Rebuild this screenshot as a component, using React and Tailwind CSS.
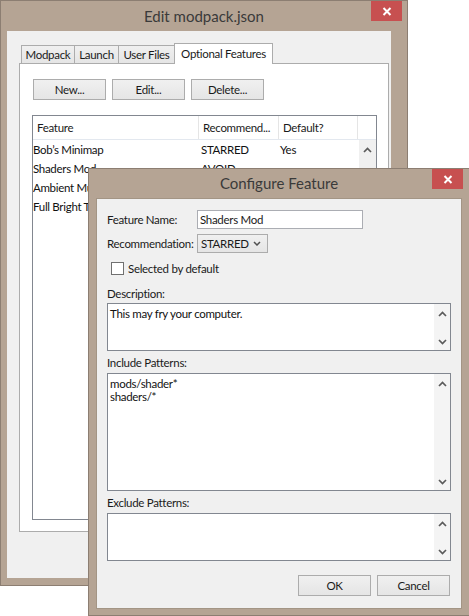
import React from 'react';

function Chevron({ up }) {
  return (
    <svg width="9" height="6" viewBox="0 0 9 6">
      <polyline
        points={up ? '1,5 4.5,1.5 8,5' : '1,1 4.5,4.5 8,1'}
        fill="none"
        stroke="#5a5a5a"
        strokeWidth="1.7"
      />
    </svg>
  );
}

function CloseButton({ className }) {
  return (
    <div className={`absolute top-0 w-[31px] h-[20px] bg-[#c75050] flex items-center justify-center ${className}`}>
      <svg width="10" height="9" viewBox="0 0 10 9">
        <path d="M1.5 1 L8.5 8 M8.5 1 L1.5 8" stroke="#ffffff" strokeWidth="2" />
      </svg>
    </div>
  );
}

function Btn({ children, className }) {
  return (
    <div className={`flex items-center justify-center h-[21px] w-[73px] border border-[#acacac] bg-linear-to-b from-[#f0f0f0] to-[#e5e5e5] text-[#1a1a1a] ${className || ''}`}>
      {children}
    </div>
  );
}

function TextBox({ h, lines }) {
  return (
    <div className={`flex w-[344px] border border-[#828790] bg-white ${h}`}>
      <div className="flex-1 pl-[2px] pt-[3px] leading-[13px] text-[#111]">
        {lines.map((l) => (
          <div key={l} className="h-[13px]">{l}</div>
        ))}
      </div>
      <div className="w-[16px] bg-[#f4f4f4] flex flex-col items-center justify-between pt-[7px] pb-[5px]">
        <Chevron up />
        <Chevron />
      </div>
    </div>
  );
}

const rows = [
  ['Bob\u2019s Minimap', 'STARRED', 'Yes'],
  ['Shaders Mod', 'AVOID', ''],
  ['Ambient Music', '', ''],
  ['Full Bright Textures', '', ''],
];

export default function App() {
  return (
    <div className="relative w-[469px] h-[616px] bg-white overflow-hidden font-['Lato',sans-serif] text-[11.5px] tracking-[-0.3px]">
      {/* Edit modpack.json window */}
      <div className="absolute left-0 top-0 w-[408px] h-[586px] bg-[#b5a494] border border-[#8c7e72] flex flex-col">
        <div className="relative h-[30px] flex items-center justify-center text-[15px] tracking-normal text-[#3a3a3a]">
          Edit modpack.json
          <CloseButton className="right-[5px]" />
        </div>
        <div className="ml-[6px] w-[384px] flex-1 mb-[7px] bg-[#f0f0f0] flex flex-col pl-[12px] pr-[2px] pt-[11px] pb-[46px]">
          <div className="flex items-end ml-[2px] h-[21px]">
            <div className="w-[53px] h-[18px] border-l border-t border-[#acacac] bg-linear-to-b from-[#f0f0f0] to-[#e5e5e5] flex items-center justify-center text-[#1a1a1a]">Modpack</div>
            <div className="w-[44px] h-[18px] border-l border-t border-[#acacac] bg-linear-to-b from-[#f0f0f0] to-[#e5e5e5] flex items-center justify-center text-[#1a1a1a]">Launch</div>
            <div className="w-[56px] h-[18px] border-l border-t border-[#acacac] bg-linear-to-b from-[#f0f0f0] to-[#e5e5e5] flex items-center justify-center text-[#1a1a1a]">User Files</div>
            <div className="relative z-10 w-[99px] h-[21px] -mb-px border-l border-t border-r border-[#acacac] bg-white flex items-center justify-center text-[#1a1a1a]">Optional Features</div>
          </div>
          <div className="flex-1 bg-white border border-[#acacac] pl-[12px] pt-[15px]">
            <div className="flex gap-[6px] ml-px">
              <Btn>New...</Btn>
              <Btn>Edit...</Btn>
              <Btn>Delete...</Btn>
            </div>
            <div className="mt-[15px] w-[345px] h-[405px] border border-[#828790] bg-white flex flex-col">
              <div className="flex h-[24px] border-b border-[#e3e8ef] text-[#1a1a1a]">
                <div className="w-[166px] border-r border-[#e5e5e5] pl-[4px] flex items-center">Feature</div>
                <div className="w-[80px] border-r border-[#e5e5e5] pl-[4px] flex items-center">Recommend...</div>
                <div className="w-[79px] border-r border-[#e5e5e5] pl-[4px] flex items-center">Default?</div>
              </div>
              <div className="flex flex-1">
                <div className="flex-1">
                  {rows.map((r) => (
                    <div key={r[0]} className="flex h-[19px] items-center text-[#111]">
                      <div className="w-[166px] whitespace-nowrap overflow-hidden">{r[0]}</div>
                      <div className="w-[80px] pl-[2px]">{r[1]}</div>
                      <div className="pl-px">{r[2]}</div>
                    </div>
                  ))}
                </div>
                <div className="w-[17px] bg-[#f0f0f0] flex flex-col items-center pt-[7px]">
                  <Chevron up />
                </div>
              </div>
            </div>
          </div>
        </div>
      </div>

      {/* Configure Feature dialog */}
      <div className="absolute left-[88px] top-[168px] w-[382px] h-[448px] bg-[#b5a494] border border-[#8c7e72] flex flex-col">
        <div className="relative h-[29px] flex items-center justify-center text-[15px] tracking-normal text-[#3a3a3a]">
          Configure Feature
          <CloseButton className="right-[6px]" />
        </div>
        <div className="ml-[7px] w-[366px] flex-1 mb-[6px] bg-[#f0f0f0] border border-[#a39585] pl-[10px] pt-[11px] text-[#1a1a1a]">
          <div className="flex items-center h-[19px]">
            <div className="w-[90px] whitespace-nowrap">Feature Name:</div>
            <div className="w-[166px] h-[19px] border border-[#abadb3] bg-white pl-[2px] flex items-center">Shaders Mod</div>
          </div>
          <div className="flex items-center h-[19px] mt-[5px]">
            <div className="w-[90px] whitespace-nowrap">Recommendation:</div>
            <div className="w-[71px] h-[19px] border border-[#acacac] bg-linear-to-b from-[#f0f0f0] to-[#e5e5e5] pl-[3px] pr-[6px] flex items-center justify-between">
              <span>STARRED</span>
              <svg width="8" height="5" viewBox="0 0 8 5">
                <polyline points="1,1 4,4 7,1" fill="none" stroke="#505050" strokeWidth="1.5" />
              </svg>
            </div>
          </div>
          <div className="flex items-center mt-[9px] ml-[4px] h-[13px]">
            <div className="w-[13px] h-[13px] border border-[#707070] bg-white" />
            <span className="ml-[4px]">Selected by default</span>
          </div>
          <div className="mt-[11px] h-[15px] leading-[15px]">Description:</div>
          <div className="mt-[2px]">
            <TextBox h="h-[48px]" lines={['This may fry your computer.']} />
          </div>
          <div className="mt-[4px] h-[15px] leading-[15px]">Include Patterns:</div>
          <div className="mt-[3px]">
            <TextBox h="h-[118px]" lines={['mods/shader*', 'shaders/*']} />
          </div>
          <div className="mt-[4px] h-[15px] leading-[15px]">Exclude Patterns:</div>
          <div className="mt-[3px]">
            <TextBox h="h-[48px]" lines={[]} />
          </div>
          <div className="flex justify-end gap-[6px] mt-[14px] w-[344px] pr-[1px]">
            <Btn>OK</Btn>
            <Btn>Cancel</Btn>
          </div>
        </div>
      </div>
    </div>
  );
}
